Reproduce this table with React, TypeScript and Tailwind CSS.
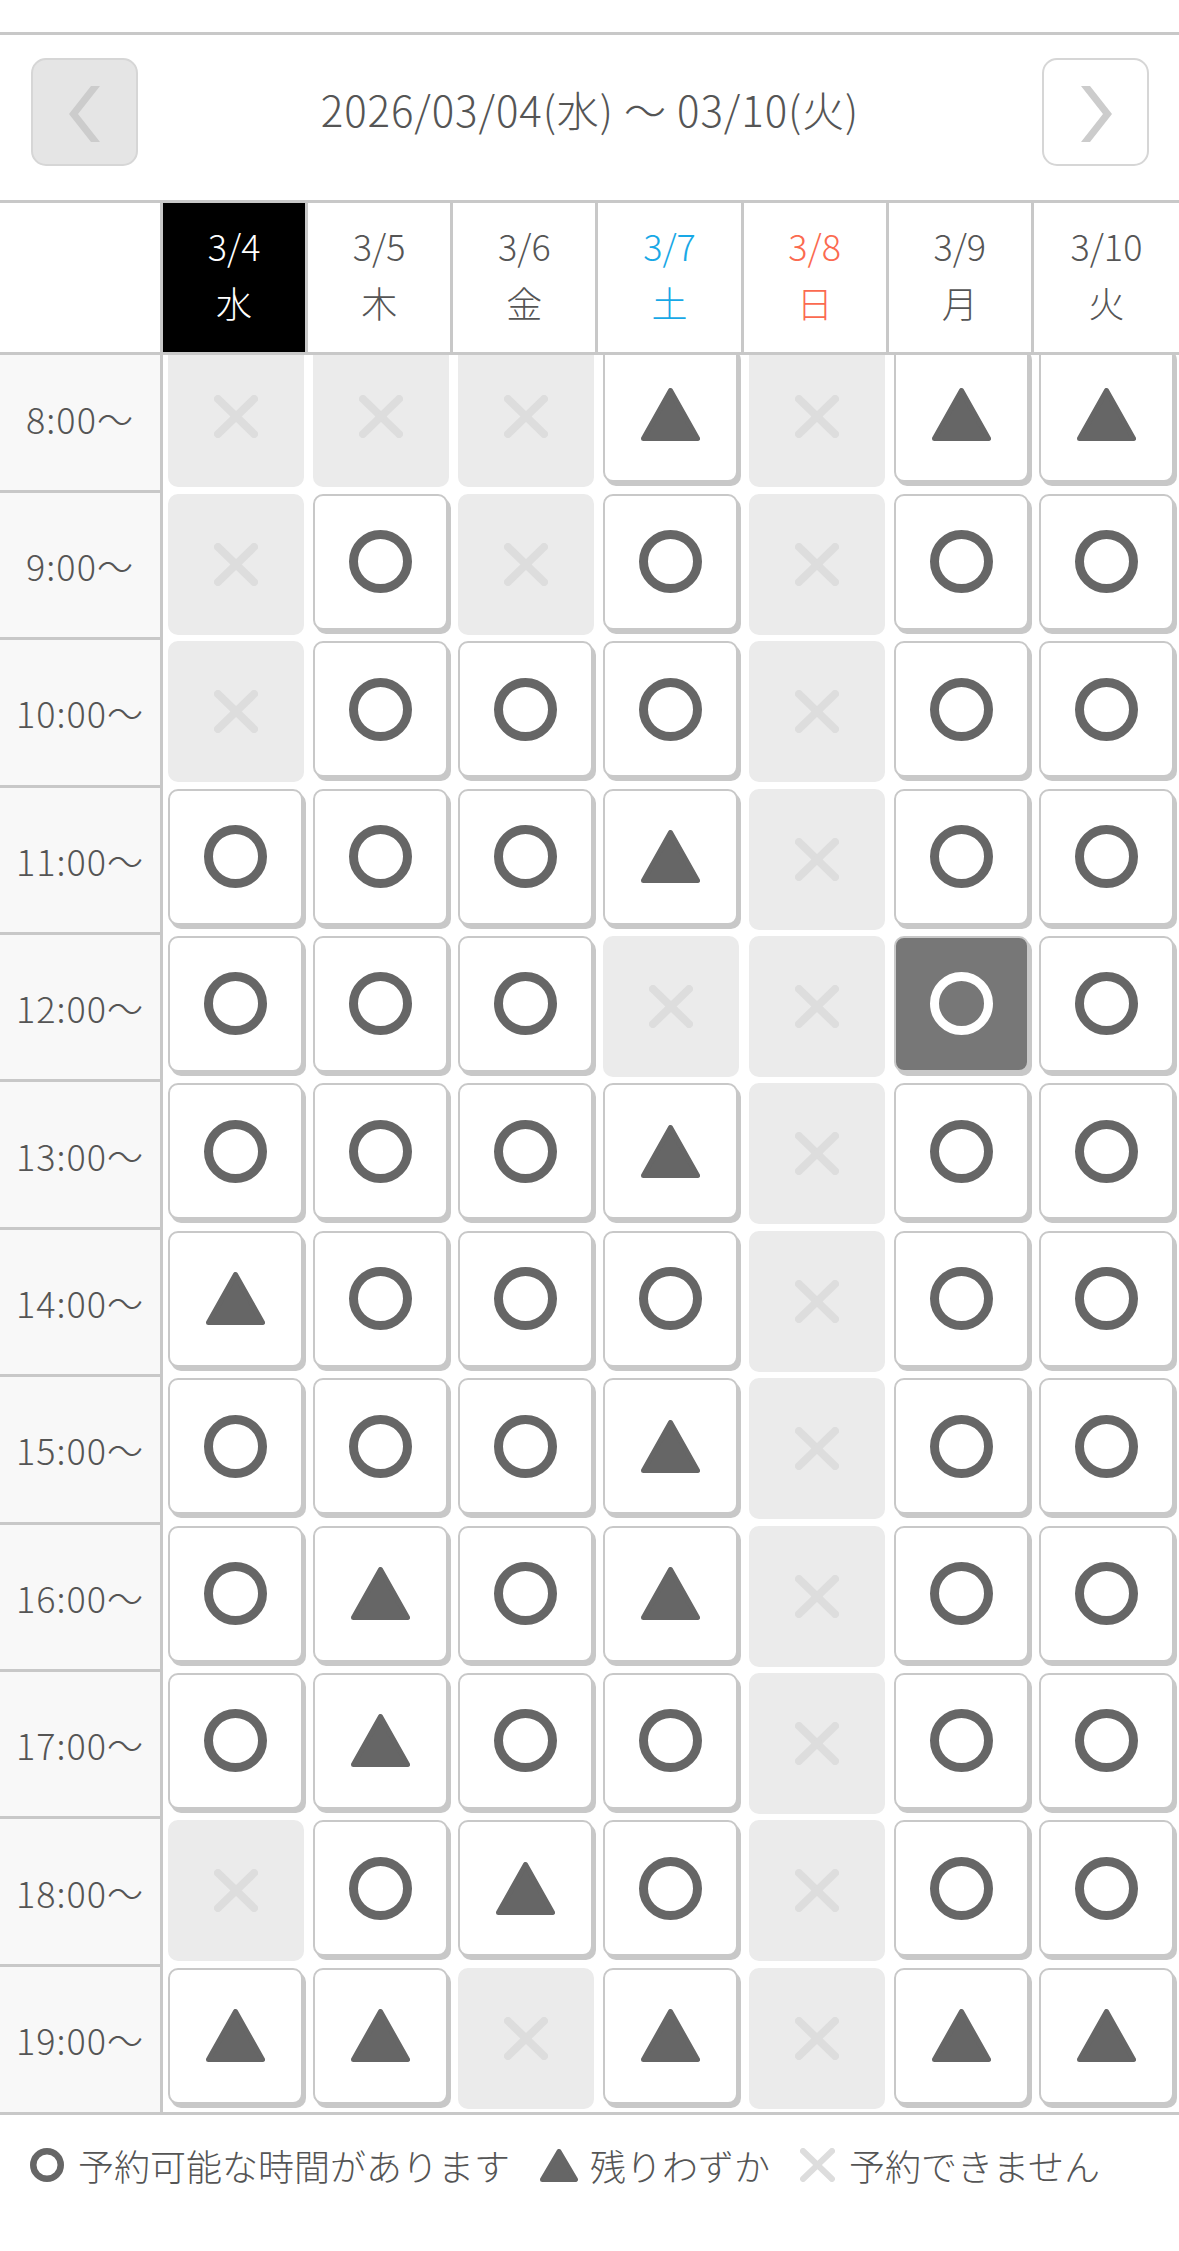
import React from 'react';

type Slot = 'o' | 't' | 'x' | 's';

const days = [
  { date: '3/4', wd: '水', color: 'text-white', active: true },
  { date: '3/5', wd: '木', color: 'text-[#555555]' },
  { date: '3/6', wd: '金', color: 'text-[#555555]' },
  { date: '3/7', wd: '土', color: 'text-[#18a8e6]' },
  { date: '3/8', wd: '日', color: 'text-[#fb6a50]' },
  { date: '3/9', wd: '月', color: 'text-[#555555]' },
  { date: '3/10', wd: '火', color: 'text-[#555555]' },
];

const rows: { time: string; slots: Slot[] }[] = [
  { time: '8:00〜', slots: ['x', 'x', 'x', 't', 'x', 't', 't'] },
  { time: '9:00〜', slots: ['x', 'o', 'x', 'o', 'x', 'o', 'o'] },
  { time: '10:00〜', slots: ['x', 'o', 'o', 'o', 'x', 'o', 'o'] },
  { time: '11:00〜', slots: ['o', 'o', 'o', 't', 'x', 'o', 'o'] },
  { time: '12:00〜', slots: ['o', 'o', 'o', 'x', 'x', 's', 'o'] },
  { time: '13:00〜', slots: ['o', 'o', 'o', 't', 'x', 'o', 'o'] },
  { time: '14:00〜', slots: ['t', 'o', 'o', 'o', 'x', 'o', 'o'] },
  { time: '15:00〜', slots: ['o', 'o', 'o', 't', 'x', 'o', 'o'] },
  { time: '16:00〜', slots: ['o', 't', 'o', 't', 'x', 'o', 'o'] },
  { time: '17:00〜', slots: ['o', 't', 'o', 'o', 'x', 'o', 'o'] },
  { time: '18:00〜', slots: ['x', 'o', 't', 'o', 'x', 'o', 'o'] },
  { time: '19:00〜', slots: ['t', 't', 'x', 't', 'x', 't', 't'] },
];

const Circle = ({ size = 63, stroke = 9, color = '#666666' }: { size?: number; stroke?: number; color?: string }) => (
  <svg width={size} height={size} viewBox={`0 0 ${size} ${size}`}>
    <circle cx={size / 2} cy={size / 2} r={(size - stroke) / 2} fill="none" stroke={color} strokeWidth={stroke} />
  </svg>
);

const Triangle = ({ w = 59, h = 53 }: { w?: number; h?: number }) => (
  <svg width={w} height={h} viewBox={`0 0 ${w} ${h}`}>
    <polygon
      points={`${w / 2},2.5 ${w - 2.5},${h - 2.5} 2.5,${h - 2.5}`}
      fill="#666666"
      stroke="#666666"
      strokeWidth={5}
      strokeLinejoin="round"
    />
  </svg>
);

const Cross = ({ w = 44, h = 43, stroke = 8 }: { w?: number; h?: number; stroke?: number }) => {
  const p = stroke / 2;
  return (
    <svg width={w} height={h} viewBox={`0 0 ${w} ${h}`}>
      <g stroke="#dddddd" strokeWidth={stroke} strokeLinecap="round">
        <line x1={p} y1={p} x2={w - p} y2={h - p} />
        <line x1={w - p} y1={p} x2={p} y2={h - p} />
      </g>
    </svg>
  );
};

const Chevron = ({ dir }: { dir: 'left' | 'right' }) => (
  <svg width="31" height="56" viewBox="0 0 31 56">
    <polygon
      points={dir === 'left' ? '22,0 31,0 9,28 31,56 22,56 0,28' : '0,0 9,0 31,28 9,56 0,56 22,28'}
      fill="#cccccc"
    />
  </svg>
);

const Cell = ({ slot }: { slot: Slot }) => {
  if (slot === 'x') {
    return (
      <div className="ml-[5px] mt-[1px] flex h-[141px] w-[136px] items-center justify-center rounded-[10px] bg-[#ebebeb]">
        <Cross />
      </div>
    );
  }
  const selected = slot === 's';
  return (
    <div
      className={`ml-[5px] mt-[1px] flex h-[136px] w-[135px] items-center justify-center rounded-[10px] border-2 border-[#c8c8c8] shadow-[3px_4px_0_#c8c8c8] ${
        selected ? 'bg-[#777777]' : 'bg-white'
      }`}
    >
      {slot === 't' ? <Triangle /> : <Circle color={selected ? '#ffffff' : '#666666'} />}
    </div>
  );
};

const App: React.FC = () => {
  return (
    <div className="min-h-[2251px] bg-white font-['Noto_Sans_CJK_JP',sans-serif] font-light text-[#555555]">
      <div className="h-[32px]" />

      {/* week switcher */}
      <div className="flex h-[171px] items-center border-y-[3px] border-[#c8c8c8] px-[30px] pb-[11px]">
        <button className="ml-px flex h-[108px] w-[107px] items-center justify-center rounded-[15px] border-2 border-[#d6d6d6] bg-[#e5e5e5]">
          <span className="ml-[-1px] mt-[3px]">
            <Chevron dir="left" />
          </span>
        </button>
        <div className="flex-1 pb-[7px] text-center text-[42px] leading-none tracking-[0.9px]">
          2026/03/04(水) 〜 03/10(火)
        </div>
        <button className="flex h-[108px] w-[107px] items-center justify-center rounded-[15px] border-2 border-[#d6d6d6] bg-white">
          <span className="ml-[1px] mt-[3px]">
            <Chevron dir="right" />
          </span>
        </button>
      </div>

      {/* day header */}
      <div className="flex h-[152px] border-b-[3px] border-[#c8c8c8]">
        <div className="w-[163px] shrink-0 border-r-[3px] border-[#c8c8c8]" />
        <div className="grid flex-1 grid-cols-7">
          {days.map((d, i) => (
            <div
              key={d.date}
              className={`flex flex-col items-center justify-center pb-[7px] text-[36px] leading-[57px] ${d.color} ${
                i < 6 ? 'border-r-[3px] border-[#c8c8c8]' : ''
              } ${d.active ? 'bg-black' : ''}`}
            >
              <span>{d.date}</span>
              <span>{d.wd}</span>
            </div>
          ))}
        </div>
      </div>

      {/* slots */}
      <div className="overflow-hidden border-b-[3px] border-[#c8c8c8]">
        <div className="-mt-[9.6px]">
          {rows.map((r, ri) => (
            <div key={r.time} className="flex">
              <div
                className={`flex w-[163px] shrink-0 items-center justify-center border-r-[3px] border-[#c8c8c8] bg-[#f8f8f8] text-[36px] tracking-[1px] ${
                  ri < rows.length - 1 ? 'h-[147.4px] border-b-[3px]' : 'h-[145.5px]'
                }`}
              >
                {r.time}
              </div>
              <div className="grid flex-1 grid-cols-7">
                {r.slots.map((s, ci) => (
                  <div key={ci}>
                    <Cell slot={s} />
                  </div>
                ))}
              </div>
            </div>
          ))}
        </div>
      </div>

      {/* legend */}
      <div className="flex items-center pl-[30px] pt-[32px] text-[36px] leading-[36px]">
        <Circle size={34} stroke={6.5} />
        <span className="ml-[14px]">予約可能な時間があります</span>
        <span className="ml-[30px]">
          <Triangle w={38} h={33} />
        </span>
        <span className="ml-[12px]">残りわずか</span>
        <span className="ml-[30px]">
          <Cross w={35} h={34} stroke={6} />
        </span>
        <span className="ml-[14px]">予約できません</span>
      </div>
    </div>
  );
};

export default App;
